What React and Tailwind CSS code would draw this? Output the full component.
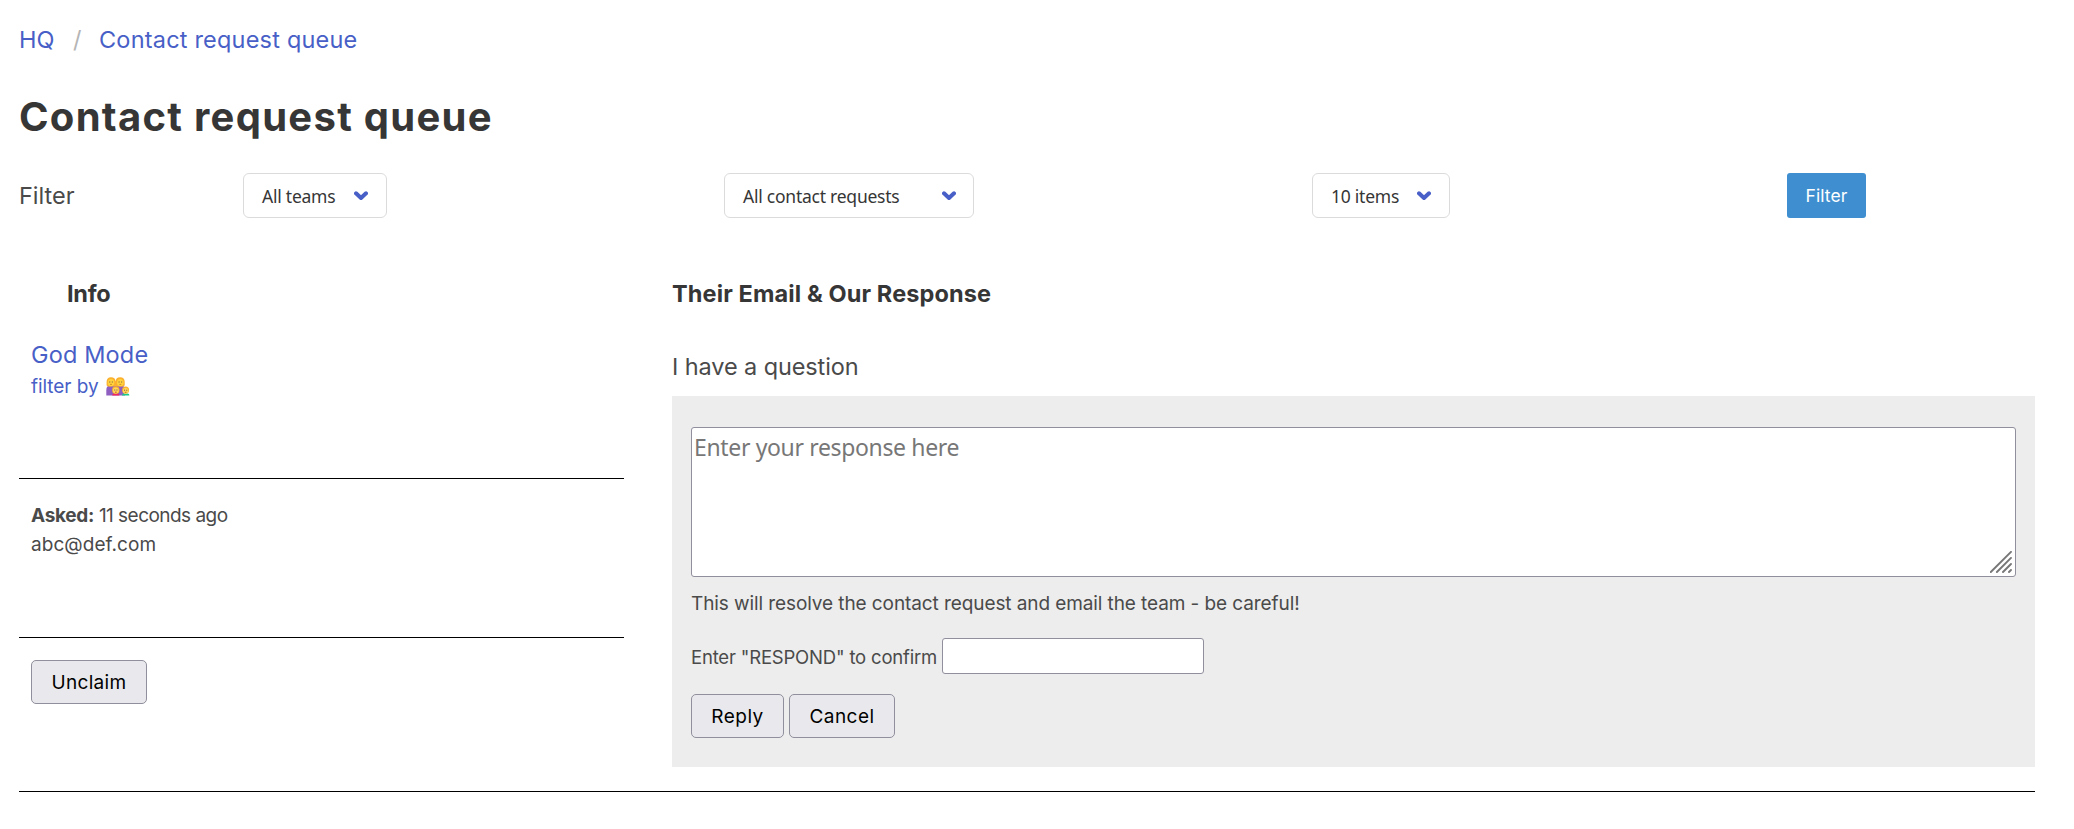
function Chevron() {
  return (
    <svg className="shrink-0" width="14" height="10" viewBox="0 0 14 10" fill="none">
      <path d="M2 2.3 L7 7 L12 2.3" stroke="#485fc7" strokeWidth="4" strokeLinecap="round" strokeLinejoin="round" />
    </svg>
  );
}

function Select({ label, className }) {
  return (
    <button
      type="button"
      className={`flex h-[45px] items-center justify-between rounded-[6px] border border-[#dbdbdb] bg-white pl-[18px] font-['Noto_Sans',sans-serif] text-[17.5px] leading-[27px] tracking-[-0.24px] text-[#363636] ${className}`}
    >
      <span className="pt-0.5 whitespace-nowrap">{label}</span>
      <Chevron />
    </button>
  );
}

function PlainButton({ children, className }) {
  return (
    <button
      type="button"
      className={`flex h-11 items-center justify-center rounded-[5px] border border-[#8f8f9d] bg-[#e9e9ed] pt-0.5 text-[19px] leading-7 text-black ${className}`}
    >
      {children}
    </button>
  );
}

function FamilyIcon() {
  return (
    <svg className="mb-px ml-[7px]" width="24" height="19" viewBox="0 0 24 19">
      <path d="M0.3 18.6 V13 Q0.3 8.6 4.6 8.6 H14.5 Q19 8.6 19 13 V18.6 Z" fill="#8e5fc0" />
      <path d="M0.6 8.6 V5 Q0.6 0.3 5 0.3 Q9.4 0.3 9.6 4.6 Q9.8 0.3 14.2 0.3 Q18.7 0.3 18.7 5 V8.6 Q17 10.2 15 9.6 H4 Q2 10 0.6 8.6 Z" fill="#fbb02e" />
      <ellipse cx="5" cy="5.6" rx="3.3" ry="3.7" fill="#ffd23e" />
      <ellipse cx="14.3" cy="5.6" rx="3.3" ry="3.7" fill="#ffd23e" />
      <path d="M3.2 5h1.1M5.8 5h1.1M12.5 5h1.1M15.1 5h1.1" stroke="#7f6040" strokeWidth="1" />
      <path d="M4 7.4h2M13.3 7.4h2" stroke="#c98716" strokeWidth="0.8" />
      <path d="M6.2 18.6 Q6.2 16.2 9.8 16.2 Q13.4 16.2 13.4 18.6 Z" fill="#f0285f" />
      <rect x="6.2" y="9.6" width="7.2" height="7.2" rx="3" fill="#fbb02e" />
      <ellipse cx="9.8" cy="13.4" rx="2.9" ry="3" fill="#ffd75a" />
      <path d="M8.2 13h1.1M10.4 13h1.1" stroke="#7f6040" strokeWidth="1" />
      <path d="M9 15.2h1.7" stroke="#c5403a" strokeWidth="0.9" />
      <path d="M16 18.6 Q16 16.2 19.7 16.2 Q23.4 16.2 23.4 18.6 Z" fill="#18c98b" />
      <ellipse cx="19.6" cy="13" rx="3.5" ry="3.6" fill="#fbb02e" />
      <ellipse cx="19.6" cy="13.9" rx="2.8" ry="2.8" fill="#ffd75a" />
      <path d="M18 13.2h1.1M20.2 13.2h1.1" stroke="#7f6040" strokeWidth="1" />
      <path d="M18.8 15.3h1.7" stroke="#a06020" strokeWidth="0.8" />
    </svg>
  );
}

function ResizeGrip() {
  return (
    <svg className="pointer-events-none absolute right-[4px] bottom-[4px]" width="22" height="22" viewBox="0 0 22 22">
      <path d="M0.8 21 L21 0.8 M6.9 21 L21 6.9 M13 21 L21 13 M19 21 L21 19" stroke="#777777" strokeWidth="1.9" strokeLinecap="round" fill="none" />
    </svg>
  );
}

export default function App() {
  return (
    <div className="h-[829px] overflow-hidden bg-white pl-[19px] pr-[39px] font-[Inter,sans-serif] text-[#4a4a4a]">
      <nav className="flex h-[79px] pt-[22px] text-[23.5px] leading-9 text-[#485fc7]">
        <a className="w-[54px]">HQ</a>
        <span className="w-[26px] text-[#b5b5b5]">/</span>
        <a className="tracking-[0.2px]">Contact request queue</a>
      </nav>

      <h1 className="h-[94px] pt-[14px] text-[40px] leading-[48px] font-bold tracking-[1.28px] text-[#363636]">
        Contact request queue
      </h1>

      <form className="flex h-[45px]">
        <label className="w-[224px] pt-[5px] text-[23.5px] leading-9">Filter</label>
        <div className="w-[481px]">
          <Select label="All teams" className="w-[144px] pr-[18px]" />
        </div>
        <div className="w-[588px]">
          <Select label="All contact requests" className="w-[250px] pr-[17px]" />
        </div>
        <div className="w-[475px]">
          <Select label="10 items" className="w-[138px] pr-[18px]" />
        </div>
        <button type="button" className="h-[45px] w-[79px] rounded-[3px] bg-[#3e8ed0] pt-px text-[17.5px] leading-7 tracking-[0.1px] text-white">
          Filter
        </button>
      </form>

      <main className="mt-[57px] flex border-b border-black pb-6">
        <section className="w-[605px]">
          <h2 className="h-[37px] pt-px pl-12 text-[23.5px] leading-9 font-bold tracking-[-0.3px] text-[#363636]">Info</h2>
          <div className="mt-[25px] h-[142px] border-b border-black pl-3 text-[#485fc7]">
            <a className="block text-[23.5px] leading-9 tracking-[0.15px]">God Mode</a>
            <a className="flex h-[28px] items-center text-[19px] leading-7 tracking-[-0.05px]">
              filter by
              <FamilyIcon />
            </a>
          </div>
          <div className="h-[159px] border-b border-black pt-[22px] pl-3 text-[19px] leading-[29px]">
            <p className="tracking-[-0.53px]">
              <strong className="font-bold tracking-[-0.3px]">Asked:</strong> 11 seconds ago
            </p>
            <p className="tracking-[0.05px]">abc@def.com</p>
          </div>
          <PlainButton className="mt-[22px] ml-3 w-[116px] tracking-[0.3px]">Unclaim</PlainButton>
        </section>

        <section className="ml-12 min-w-0 flex-1">
          <h2 className="h-[37px] pt-px text-[23.5px] leading-9 font-bold tracking-[0.12px] text-[#363636]">Their Email &amp; Our Response</h2>
          <p className="mt-[37px] text-[23.5px] leading-9 tracking-[-0.1px]">I have a question</p>
          <div className="mt-[11px] h-[371px] bg-[#ededed] px-[19px] pt-[31px]">
            <div className="relative h-[150px]">
              <textarea
                placeholder="Enter your response here"
                className="block h-[150px] w-full resize-none rounded-[3px] border border-[#8f8f9d] bg-white px-[2px] pt-[3px] font-['Noto_Sans',sans-serif] text-[23px] leading-8 tracking-[-0.35px] placeholder:text-[#777777]"
              />
              <ResizeGrip />
            </div>
            <p className="mt-[12px] text-[19px] leading-[29px] tracking-[-0.09px]">
              This will resolve the contact request and email the team - be careful!
            </p>
            <div className="mt-[20px] flex h-9 items-center">
              <label className="w-[251px] pt-0.5 text-[18.5px] leading-[29px] tracking-[-0.19px]">Enter "RESPOND" to confirm</label>
              <input className="h-9 w-[262px] rounded-[3px] border border-[#8f8f9d] bg-white" />
            </div>
            <div className="mt-[20px] flex gap-[5px]">
              <PlainButton className="w-[93px] tracking-[0.5px]">Reply</PlainButton>
              <PlainButton className="w-[106px] tracking-[0.45px]">Cancel</PlainButton>
            </div>
          </div>
        </section>
      </main>
    </div>
  );
}
